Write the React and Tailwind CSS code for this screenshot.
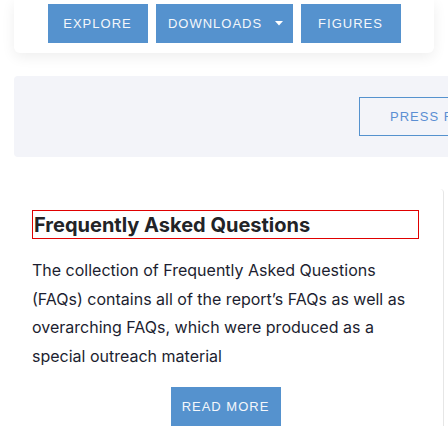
export default function App() {
  const btn =
    "h-[39px] flex items-center justify-center bg-[#5592ce] text-[#f4f7fb] text-[13px] tracking-[1px] uppercase";
  return (
    <div
      className="w-[448px] h-[448px] overflow-hidden bg-white"
      style={{ fontFamily: '"Liberation Sans", Arial, sans-serif' }}
    >
      <div className="mx-[14px] h-[53px] bg-white rounded-b-md shadow-[0_4px_14px_rgba(0,0,0,0.07)] flex justify-center gap-[8px] pt-[4px]">
        <div className={btn + " w-[100px]"}>Explore</div>
        <div className={btn + " w-[137px] gap-[13px] pl-[3px]"}>
          <span>Downloads</span>
          <svg width="8" height="5" viewBox="0 0 8 5">
            <path d="M0 0h8L4 4.5z" fill="white" />
          </svg>
        </div>
        <div className={btn + " w-[100px]"}>Figures</div>
      </div>

      <div className="ml-[14px] mt-[23px] w-[434px] h-[81px] bg-[#f3f4f9] rounded-l-sm flex justify-end pt-[21px]">
        <div className="w-[89px] h-[39px] border-l border-y border-[#5592ce] flex items-center pl-[30px] text-[13px] tracking-[1px] text-[#5b8fd3] whitespace-nowrap overflow-hidden">
          PRESS RELEASE
        </div>
      </div>

      <div className="ml-[14px] mt-[32px] w-[430px] border-r border-[#e6e6e6] rounded-tr-sm pl-[18px] pr-[24px] pt-[21px]">
        <div className="border border-[#e00000] h-[29px] flex items-center">
          <h2
            className="text-[20px] font-bold text-[#222327] leading-none pl-[1px]"
            style={{ fontFamily: 'Inter, "Liberation Sans", sans-serif' }}
          >
            Frequently Asked Questions
          </h2>
        </div>
        <p
          className="mt-[17px] text-[16px] leading-[28.5px] text-[#1c1e30]"
          style={{ fontFamily: 'Inter, "Liberation Sans", sans-serif' }}
        >
          The collection of Frequently Asked Questions (FAQs) contains all of the
          report’s FAQs as well as overarching FAQs, which were produced as a
          special outreach material
        </p>
        <div className="flex justify-center mt-[17px]">
          <div className={btn + " w-[110px] h-[38px]"}>Read More</div>
        </div>
      </div>
    </div>
  );
}
